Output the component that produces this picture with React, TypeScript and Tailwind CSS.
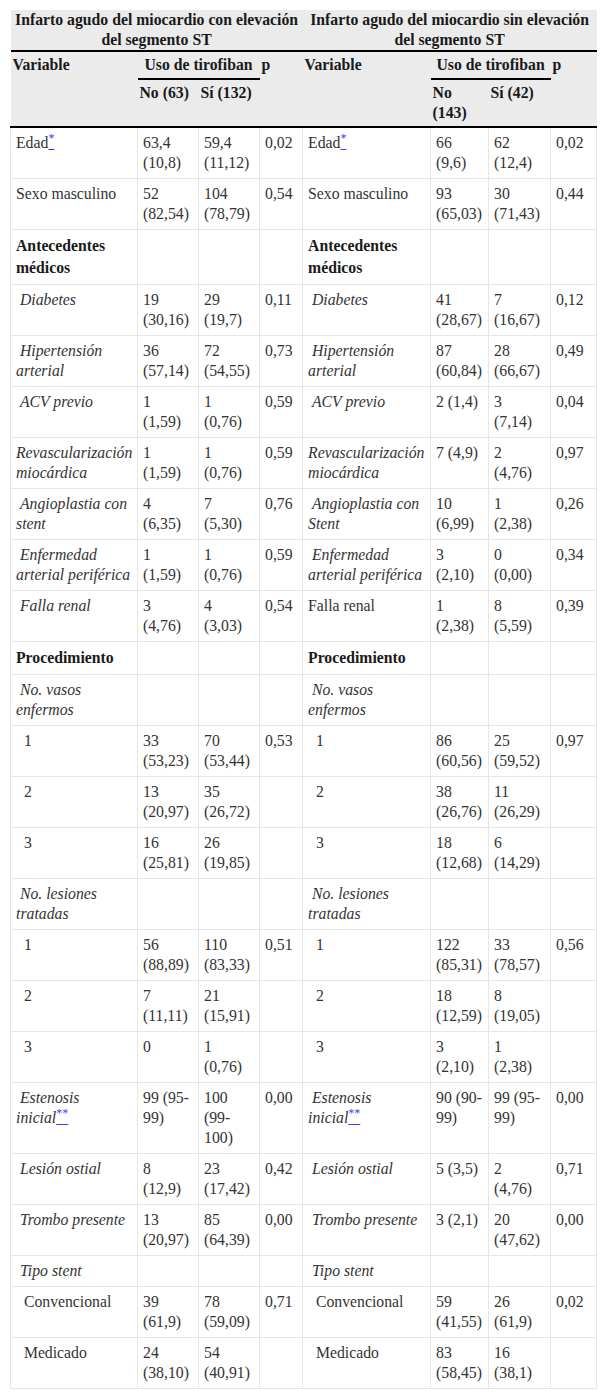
type Var = { t: string; k?: "b" | "i"; note?: string };
type Side = [Var, string, string, string];

const v = (t: string, k?: "b" | "i", note?: string): Var => ({ t, k, note });
const NB = "\u00a0";

const rows: [Side, Side][] = [
  [
    [v("Edad", undefined, "*"), "63,4\n(10,8)", "59,4\n(11,12)", "0,02"],
    [v("Edad", undefined, "*"), "66\n(9,6)", "62\n(12,4)", "0,02"],
  ],
  [
    [v("Sexo masculino"), "52\n(82,54)", "104\n(78,79)", "0,54"],
    [v("Sexo masculino"), "93\n(65,03)", "30\n(71,43)", "0,44"],
  ],
  [
    [v("Antecedentes\nmédicos", "b"), "", "", ""],
    [v("Antecedentes\nmédicos", "b"), "", "", ""],
  ],
  [
    [v(NB + "Diabetes", "i"), "19\n(30,16)", "29\n(19,7)", "0,11"],
    [v(NB + "Diabetes", "i"), "41\n(28,67)", "7\n(16,67)", "0,12"],
  ],
  [
    [v(NB + "Hipertensión\narterial", "i"), "36\n(57,14)", "72\n(54,55)", "0,73"],
    [v(NB + "Hipertensión\narterial", "i"), "87\n(60,84)", "28\n(66,67)", "0,49"],
  ],
  [
    [v(NB + "ACV previo", "i"), "1\n(1,59)", "1\n(0,76)", "0,59"],
    [v(NB + "ACV previo", "i"), "2 (1,4)", "3\n(7,14)", "0,04"],
  ],
  [
    [v("Revascularización\nmiocárdica", "i"), "1\n(1,59)", "1\n(0,76)", "0,59"],
    [v("Revascularización\nmiocárdica", "i"), "7 (4,9)", "2\n(4,76)", "0,97"],
  ],
  [
    [v(NB + "Angioplastia con\nstent", "i"), "4\n(6,35)", "7\n(5,30)", "0,76"],
    [v(NB + "Angioplastia con\nStent", "i"), "10\n(6,99)", "1\n(2,38)", "0,26"],
  ],
  [
    [v(NB + "Enfermedad\narterial periférica", "i"), "1\n(1,59)", "1\n(0,76)", "0,59"],
    [v(NB + "Enfermedad\narterial periférica", "i"), "3\n(2,10)", "0\n(0,00)", "0,34"],
  ],
  [
    [v(NB + "Falla renal", "i"), "3\n(4,76)", "4\n(3,03)", "0,54"],
    [v("Falla renal"), "1\n(2,38)", "8\n(5,59)", "0,39"],
  ],
  [
    [v("Procedimiento", "b"), "", "", ""],
    [v("Procedimiento", "b"), "", "", ""],
  ],
  [
    [v(NB + "No. vasos\nenfermos", "i"), "", "", ""],
    [v(NB + "No. vasos\nenfermos", "i"), "", "", ""],
  ],
  [
    [v(NB + NB + "1"), "33\n(53,23)", "70\n(53,44)", "0,53"],
    [v(NB + NB + "1"), "86\n(60,56)", "25\n(59,52)", "0,97"],
  ],
  [
    [v(NB + NB + "2"), "13\n(20,97)", "35\n(26,72)", ""],
    [v(NB + NB + "2"), "38\n(26,76)", "11\n(26,29)", ""],
  ],
  [
    [v(NB + NB + "3"), "16\n(25,81)", "26\n(19,85)", ""],
    [v(NB + NB + "3"), "18\n(12,68)", "6\n(14,29)", ""],
  ],
  [
    [v(NB + "No. lesiones\ntratadas", "i"), "", "", ""],
    [v(NB + "No. lesiones\ntratadas", "i"), "", "", ""],
  ],
  [
    [v(NB + NB + "1"), "56\n(88,89)", "110\n(83,33)", "0,51"],
    [v(NB + NB + "1"), "122\n(85,31)", "33\n(78,57)", "0,56"],
  ],
  [
    [v(NB + NB + "2"), "7\n(11,11)", "21\n(15,91)", ""],
    [v(NB + NB + "2"), "18\n(12,59)", "8\n(19,05)", ""],
  ],
  [
    [v(NB + NB + "3"), "0", "1\n(0,76)", ""],
    [v(NB + NB + "3"), "3\n(2,10)", "1\n(2,38)", ""],
  ],
  [
    [v(NB + "Estenosis\ninicial", "i", "**"), "99 (95-\n99)", "100\n(99-\n100)", "0,00"],
    [v(NB + "Estenosis\ninicial", "i", "**"), "90 (90-\n99)", "99 (95-\n99)", "0,00"],
  ],
  [
    [v(NB + "Lesión ostial", "i"), "8\n(12,9)", "23\n(17,42)", "0,42"],
    [v(NB + "Lesión ostial", "i"), "5 (3,5)", "2\n(4,76)", "0,71"],
  ],
  [
    [v(NB + "Trombo presente", "i"), "13\n(20,97)", "85\n(64,39)", "0,00"],
    [v(NB + "Trombo presente", "i"), "3 (2,1)", "20\n(47,62)", "0,00"],
  ],
  [
    [v(NB + "Tipo stent", "i"), "", "", ""],
    [v(NB + "Tipo stent", "i"), "", "", ""],
  ],
  [
    [v(NB + NB + "Convencional"), "39\n(61,9)", "78\n(59,09)", "0,71"],
    [v(NB + NB + "Convencional"), "59\n(41,55)", "26\n(61,9)", "0,02"],
  ],
  [
    [v(NB + NB + "Medicado"), "24\n(38,10)", "54\n(40,91)", ""],
    [v(NB + NB + "Medicado"), "83\n(58,45)", "16\n(38,1)", ""],
  ],
];

const td = "border border-[#e6e6e6] px-[5px] py-[5px] align-top whitespace-pre";

function VarCell({ d }: { d: Var }) {
  const style =
    d.k === "b" ? "font-bold leading-[22px] text-[#1a1a1a]" : d.k === "i" ? "italic" : "";
  return (
    <td className={`${td} ${style}`}>
      {d.t}
      {d.note && (
        <a href="#" className="text-[#3b3bff] underline not-italic">
          <sup className="text-[12px]">{d.note}</sup>
        </a>
      )}
    </td>
  );
}

function SideCells({ s }: { s: Side }) {
  return (
    <>
      <VarCell d={s[0]} />
      <td className={td}>{s[1]}</td>
      <td className={td}>{s[2]}</td>
      <td className={td}>{s[3]}</td>
    </>
  );
}

const th = "px-[2px] align-top font-bold text-[#1a1a1a] whitespace-pre";

function HeaderTop() {
  return (
    <>
      <th rowSpan={2} className={`${th} text-left border-b-2 border-black pt-[3px]`}>
        Variable
      </th>
      <th colSpan={2} className={`${th} text-center border-b-2 border-black pt-[3px] pb-[3px]`}>
        Uso de tirofiban
      </th>
      <th rowSpan={2} className={`${th} text-left border-b-2 border-black pt-[3px]`}>
        p
      </th>
    </>
  );
}

export default function App() {
  const sub = `${th} text-left border-b-2 border-black pt-[3px] pb-[3px]`;
  return (
    <div className="min-h-screen bg-white p-[10px] font-['Liberation_Serif','Times_New_Roman',serif] text-[15.75px] leading-[20px] text-[#333]">
      <table className="w-[586px] table-fixed border-collapse">
        <colgroup>
          <col className="w-[127px]" />
          <col className="w-[61px]" />
          <col className="w-[61px]" />
          <col className="w-[43px]" />
          <col className="w-[128px]" />
          <col className="w-[58px]" />
          <col className="w-[62px]" />
          <col className="w-[46px]" />
        </colgroup>
        <thead className="bg-[#ebebeb]">
          <tr>
            <th colSpan={4} className={`${th} text-center border-b-2 border-black py-0`}>
              {"Infarto agudo del miocardio con elevación\ndel segmento ST"}
            </th>
            <th colSpan={4} className={`${th} text-center border-b-2 border-black py-0`}>
              {"Infarto agudo del miocardio sin elevación\ndel segmento ST"}
            </th>
          </tr>
          <tr>
            <HeaderTop />
            <HeaderTop />
          </tr>
          <tr>
            <th className={sub}>No (63)</th>
            <th className={sub}>Sí (132)</th>
            <th className={sub}>{"No\n(143)"}</th>
            <th className={sub}>Sí (42)</th>
          </tr>
        </thead>
        <tbody>
          {rows.map((r, i) => (
            <tr key={i}>
              <SideCells s={r[0]} />
              <SideCells s={r[1]} />
            </tr>
          ))}
        </tbody>
      </table>
    </div>
  );
}
